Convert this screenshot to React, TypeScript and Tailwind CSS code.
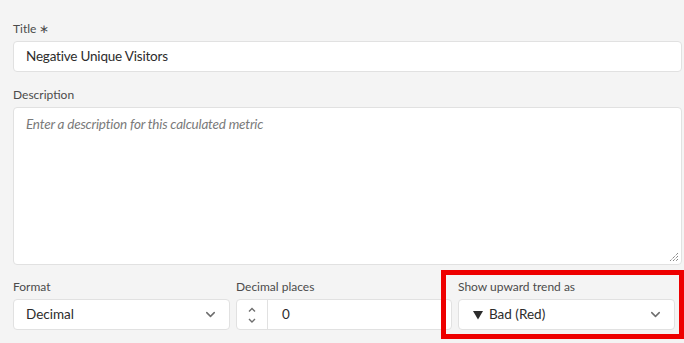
import { ChevronDown } from 'lucide-react';

const font = { fontFamily: 'Lato, "Open Sans", sans-serif' };

function Label({ children }: { children: React.ReactNode }) {
  return <div className="h-[14px] text-[12px] leading-[14px] text-[#4b4b4b] mb-[5px]">{children}</div>;
}

function Select({ value }: { value: React.ReactNode }) {
  return (
    <div className="h-[31px] flex items-center justify-between rounded-[4px] border border-[#e1e1e1] bg-white pl-[12px] pr-[11px] text-[13.5px] text-[#2c2c2c]">
      <span>{value}</span>
      <ChevronDown className="w-[15px] h-[15px] text-[#6e6e6e]" strokeWidth={2.4} />
    </div>
  );
}

export default function App() {
  return (
    <div className="relative w-[684px] h-[343px] overflow-hidden bg-[#f4f4f4] pl-[13px] pr-[2px] pt-[22px]" style={font}>
      <Label>Title ∗</Label>
      <div className="h-[31px] flex items-center rounded-[4px] border border-[#e1e1e1] bg-white px-[12px] text-[13.5px] tracking-[-0.2px] text-[#2c2c2c]">
        Negative Unique Visitors
      </div>

      <div className="mt-[16px]">
        <Label>Description</Label>
        <div className="relative h-[158px] rounded-[4px] border border-[#e1e1e1] bg-white px-[12px] pt-[6px] text-[13.5px] tracking-[-0.2px] italic text-[#7a7a7a]">
          Enter a description for this calculated metric
          <svg className="absolute right-[2px] bottom-[2px]" width="10" height="10" viewBox="0 0 10 10">
            <path d="M9 1 L1 9 M9 4 L4 9 M9 7 L7 9" stroke="#555" strokeWidth="1" strokeDasharray="1 1" />
          </svg>
        </div>
      </div>

      <div className="mt-[15px] flex gap-[6px] pr-[6px]">
        <div className="w-[217px]">
          <Label>Format</Label>
          <Select value="Decimal" />
        </div>
        <div className="w-[216px]">
          <Label>Decimal places</Label>
          <div className="h-[31px] flex rounded-[4px] border border-[#e1e1e1] bg-white text-[13.5px] text-[#2c2c2c]">
            <div className="w-[31px] flex flex-col items-center justify-center border-r border-[#e1e1e1] text-[#6e6e6e]">
              <svg width="10" height="22" viewBox="0 0 10 22" fill="none" stroke="currentColor" strokeWidth="1.4">
                <path d="M2 7.5 L5 4.5 L8 7.5" />
                <path d="M2 15 L5 18 L8 15" />
              </svg>
            </div>
            <div className="flex items-center pl-[14px]">0</div>
          </div>
        </div>
        <div className="w-[217px]">
          <Label>Show upward trend as</Label>
          <Select
            value={
              <span className="flex items-center gap-[6px]">
                <svg width="10" height="10" viewBox="0 0 10 10" className="ml-[2px]">
                  <polygon points="0,1 10,1 5,9.5" fill="#2c2c2c" />
                </svg>
                Bad (Red)
              </span>
            }
          />
        </div>
      </div>

      {/* annotation box */}
      <div className="absolute left-[441px] top-[270px] w-[243px] h-[69px] border-[5px] border-[#ee0000]" />
    </div>
  );
}
